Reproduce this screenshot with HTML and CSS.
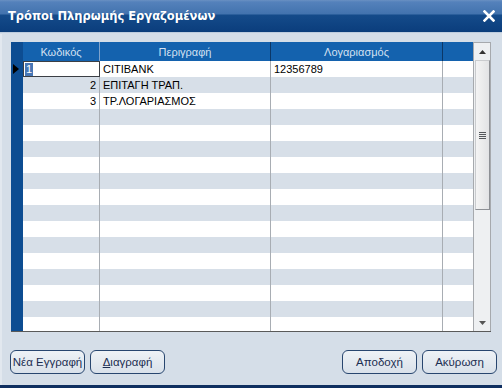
FILE: index.html
```html
<!DOCTYPE html>
<html>
<head>
<meta charset="utf-8">
<link rel="stylesheet" href="styles.css">
</head>
<body>
<div class="window">
  <div class="titlebar">
    <span class="title">Τρόποι Πληρωμής Εργαζομένων</span>
    <svg class="close" width="12" height="12" viewBox="0 0 12 12"><path d="M1.5 1.5 L10.5 10.5 M10.5 1.5 L1.5 10.5" stroke="#ffffff" stroke-width="2.6" stroke-linecap="square"/></svg>
  </div>
  <div class="body">
    <div class="grid">
      <div class="table">
        <div class="hdr">
          <div class="ind"></div>
          <div class="c1 sep-light">Κωδικός</div>
          <div class="c2">Περιγραφή</div>
          <div class="c3">Λογαριασμός</div>
          <div class="c4"></div>
        </div>
        <div class="row white">
          <div class="ind"><span class="arrow"></span></div>
          <div class="c1 focus"><span class="sel">1</span></div>
          <div class="c2">CITIBANK</div>
          <div class="c3">12356789</div>
          <div class="c4"></div>
        </div>
        <div class="row grey">
          <div class="ind"></div>
          <div class="c1 num">2</div>
          <div class="c2">ΕΠΙΤΑΓΗ ΤΡΑΠ.</div>
          <div class="c3"></div>
          <div class="c4"></div>
        </div>
        <div class="row white">
          <div class="ind"></div>
          <div class="c1 num">3</div>
          <div class="c2">ΤΡ.ΛΟΓΑΡΙΑΣΜΟΣ</div>
          <div class="c3"></div>
          <div class="c4"></div>
        </div>
        <div class="row grey"><div class="ind"></div><div class="c1"></div><div class="c2"></div><div class="c3"></div><div class="c4"></div></div>
        <div class="row white"><div class="ind"></div><div class="c1"></div><div class="c2"></div><div class="c3"></div><div class="c4"></div></div>
        <div class="row grey"><div class="ind"></div><div class="c1"></div><div class="c2"></div><div class="c3"></div><div class="c4"></div></div>
        <div class="row white"><div class="ind"></div><div class="c1"></div><div class="c2"></div><div class="c3"></div><div class="c4"></div></div>
        <div class="row grey"><div class="ind"></div><div class="c1"></div><div class="c2"></div><div class="c3"></div><div class="c4"></div></div>
        <div class="row white"><div class="ind"></div><div class="c1"></div><div class="c2"></div><div class="c3"></div><div class="c4"></div></div>
        <div class="row grey"><div class="ind"></div><div class="c1"></div><div class="c2"></div><div class="c3"></div><div class="c4"></div></div>
        <div class="row white"><div class="ind"></div><div class="c1"></div><div class="c2"></div><div class="c3"></div><div class="c4"></div></div>
        <div class="row grey"><div class="ind"></div><div class="c1"></div><div class="c2"></div><div class="c3"></div><div class="c4"></div></div>
        <div class="row white"><div class="ind"></div><div class="c1"></div><div class="c2"></div><div class="c3"></div><div class="c4"></div></div>
        <div class="row grey"><div class="ind"></div><div class="c1"></div><div class="c2"></div><div class="c3"></div><div class="c4"></div></div>
        <div class="row white"><div class="ind"></div><div class="c1"></div><div class="c2"></div><div class="c3"></div><div class="c4"></div></div>
        <div class="row grey"><div class="ind"></div><div class="c1"></div><div class="c2"></div><div class="c3"></div><div class="c4"></div></div>
        <div class="row white"><div class="ind"></div><div class="c1"></div><div class="c2"></div><div class="c3"></div><div class="c4"></div></div>
      </div>
      <div class="scrollbar">
        <div class="sb-btn"><svg width="7" height="4" viewBox="0 0 7 4"><path d="M0 4 L3.5 0 L7 4 Z" fill="#333"/></svg></div>
        <div class="thumb"><span class="grip"></span><span class="grip"></span><span class="grip"></span><span class="grip"></span></div>
        <div class="track"></div>
        <div class="sb-btn"><svg width="7" height="4" viewBox="0 0 7 4"><path d="M0 0 L7 0 L3.5 4 Z" fill="#555"/></svg></div>
      </div>
    </div>
    <div class="buttons">
      <div class="group">
        <button class="btn">Νέα Εγγραφή</button>
        <button class="btn"><u>Δ</u>ιαγραφή</button>
      </div>
      <div class="group">
        <button class="btn">Αποδοχή</button>
        <button class="btn">Ακύρωση</button>
      </div>
    </div>
  </div>
</div>
</body>
</html>
```
FILE: styles.css
```css
* { box-sizing: border-box; }
html, body { margin: 0; padding: 0; }
body {
  width: 502px;
  height: 388px;
  overflow: hidden;
  font-family: "Liberation Sans", Arial, sans-serif;
  background: #d5dee8;
}
.window {
  width: 502px;
  height: 388px;
  display: flex;
  flex-direction: column;
  background: #d5dee8;
  border-bottom: 3px solid #0f2f60;
}
.titlebar {
  height: 34px;
  flex: none;
  display: flex;
  align-items: center;
  justify-content: space-between;
  padding: 0 7px 0 8px;
  background: linear-gradient(#6a90c2 0px, #5481bb 2px, #4273ae 14px, #144b8a 15px, #0c3f7e 30px, #0b3c78 32px, #b3c4d8 32px, #dfe6ee 34px);
}
.title {
  color: #ffffff;
  font-family: "DejaVu Sans", Verdana, sans-serif;
  font-weight: bold;
  font-size: 11.5px;
  margin-top: -2px;
}
.close { margin-top: -2px; }
.body {
  flex: 1;
  display: flex;
  flex-direction: column;
  padding: 8px 11px 0 9px;
  border-left: 2px solid #e2e8ef;
}
.grid {
  display: flex;
  width: 480px;
  height: 290px;
  border-bottom: 1px solid #5a5a5a;
  overflow: hidden;
}
.table {
  width: 462px;
  height: 289px;
  overflow: hidden;
  display: flex;
  flex-direction: column;
}
.hdr, .row {
  display: flex;
  flex: none;
  font-size: 11px;
}
.hdr {
  height: 19px;
  background: #1462ae;
  color: #d3e0f1;
  align-items: stretch;
}
.hdr > div {
  display: flex;
  align-items: center;
  justify-content: center;
  border-right: 1px solid #0b3767;
  padding-top: 1px;
}
.hdr > .sep-light { border-right-color: #7fa3cc; }
.hdr > .ind { background: #0d4d92; border-right: none; }
.hdr > .c4 { border-right: none; }
.row { height: 16px; }
.row > div {
  border-right: 1px solid #a8adb3;
  display: flex;
  align-items: center;
  padding-left: 3px;
  color: #000;
  white-space: nowrap;
}
.row > .ind {
  background: #0d4d92;
  border-right: none;
  padding-left: 2px;
}
.row > .c4 { border-right: none; }
.ind { width: 12px; }
.c1 { width: 77px; }
.c2 { width: 171px; }
.c3 { width: 172px; }
.c4 { width: 30px; }
.white { background: #ffffff; }
.grey { background: #d7dfe8; }
.row > .num { justify-content: flex-end; padding-right: 3px; }
.row > .focus {
  border: 1px solid #3b3f45;
  padding-left: 1px;
  background: #fff;
}
.sel {
  background: #4777b6;
  color: #fff;
  padding: 0 1px;
  line-height: 13px;
}
.arrow {
  width: 0;
  height: 0;
  border-top: 5px solid transparent;
  border-bottom: 5px solid transparent;
  border-left: 6px solid #000;
}
.scrollbar {
  width: 18px;
  height: 289px;
  display: flex;
  flex-direction: column;
  background: #eef0f2;
  border: 1px solid #a6a9ad;
  border-bottom: none;
}
.sb-btn {
  height: 17px;
  flex: none;
  display: flex;
  align-items: center;
  justify-content: center;
}
.thumb {
  height: 150px;
  flex: none;
  margin: 0 0 0 1px;
  width: 15px;
  background: linear-gradient(90deg, #f4f4f4, #e2e3e5);
  border: 1px solid #c9cbce;
  border-right-color: #8d9095;
  border-bottom-color: #8d9095;
  display: flex;
  flex-direction: column;
  justify-content: center;
  align-items: center;
  gap: 1px;
}
.grip {
  width: 7px;
  height: 1px;
  background: #55585c;
}
.track { flex: 1; }
.buttons {
  display: flex;
  justify-content: space-between;
  margin-top: 18px;
  width: 487px;
  margin-left: -1px;
}
.group { display: flex; gap: 5px; }
.btn {
  width: 75px;
  height: 24px;
  border: 1px solid #28466f;
  border-radius: 6px;
  background: linear-gradient(#eef2f6, #d9e1ea);
  color: #1b2e52;
  font-family: "Liberation Sans", Arial, sans-serif;
  font-size: 11.5px;
  padding: 0;
  white-space: nowrap;
}
.btn u { text-decoration-thickness: 1px; }
```
